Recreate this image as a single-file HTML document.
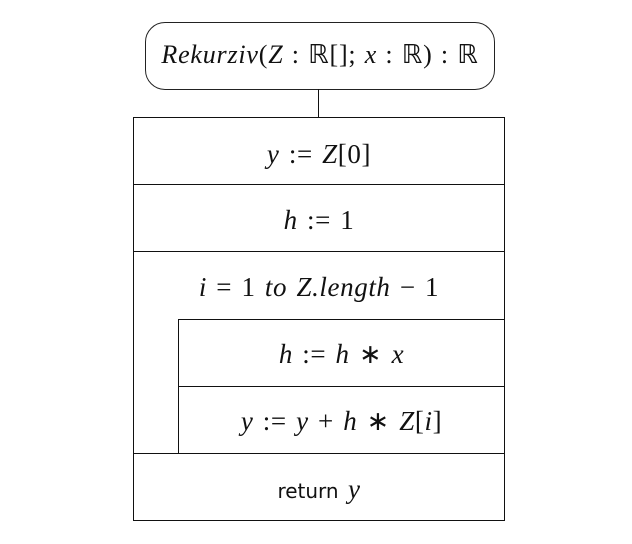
<!DOCTYPE html>
<html><head><style>
html,body{margin:0;padding:0;background:#fff;width:632px;height:544px;overflow:hidden}
.a{position:absolute;box-sizing:border-box}
.l{position:absolute;background:#111}
.t{position:absolute;text-align:center;font-family:"Liberation Serif",serif;font-style:italic;font-size:27px;letter-spacing:0.6px;word-spacing:2px;color:#111;white-space:nowrap;line-height:30px}
.u{font-style:normal}
.s{font-family:"DejaVu Sans","Liberation Sans",sans-serif;font-style:normal;font-size:20px;letter-spacing:0}
</style></head><body>
<div class="a" style="left:145px;top:22px;width:350px;height:68px;border:1px solid #222;border-radius:20px"></div>
<div class="t" style="left:145px;width:350px;top:40px;font-size:26px;letter-spacing:0.8px;word-spacing:1px">Rekurziv<span class="u">(</span>Z <span class="u">: ℝ[];</span> x <span class="u">: ℝ) : ℝ</span></div>
<div class="l" style="left:318px;top:89px;width:1px;height:29px"></div>
<div class="a" style="left:133px;top:117px;width:372px;height:404px;border:1px solid #111"></div>
<div class="l" style="left:133px;top:184px;width:372px;height:1px"></div>
<div class="l" style="left:133px;top:251px;width:372px;height:1px"></div>
<div class="l" style="left:178px;top:319px;width:327px;height:1px"></div>
<div class="l" style="left:178px;top:386px;width:327px;height:1px"></div>
<div class="l" style="left:133px;top:453px;width:372px;height:1px"></div>
<div class="l" style="left:178px;top:319px;width:1px;height:134px"></div>
<div class="t" style="left:133px;width:372px;top:139px">y <span class="u">:= </span>Z<span class="u">[0]</span></div>
<div class="t" style="left:133px;width:372px;top:205px">h <span class="u">:= 1</span></div>
<div class="t" style="left:133px;width:372px;top:272px">i <span class="u">= 1</span> to Z.length <span class="u">− 1</span></div>
<div class="t" style="left:178px;width:327px;top:339px">h <span class="u">:=</span> h <span class="u">∗</span> x</div>
<div class="t" style="left:178px;width:327px;top:406px">y <span class="u">:=</span> y <span class="u">+</span> h <span class="u">∗</span> Z<span class="u">[</span>i<span class="u">]</span></div>
<div class="t" style="left:133px;width:372px;top:474px"><span class="s">return</span> y</div>
</body></html>
